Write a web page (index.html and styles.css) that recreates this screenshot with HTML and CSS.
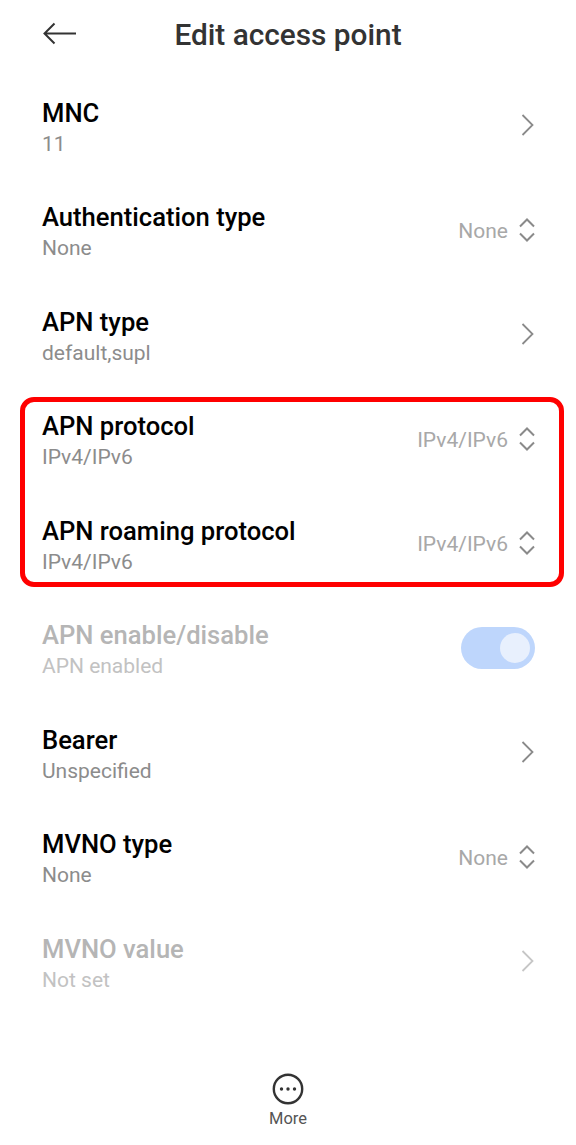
FILE: index.html
```html
<!DOCTYPE html>
<html>
  <head>
    <meta charset="utf-8">
    <title>Edit access point</title>
    <link rel="stylesheet" href="styles.css">
  </head>
  <body>
    <svg class="defs" width="0" height="0">
      <symbol id="chevron" viewBox="0 0 14 24">
        <path d="M2.500 2l10 10-10 10" fill="none" stroke="currentColor" stroke-width="1.8"/>
      </symbol>
      <symbol id="updown" viewBox="0 0 16 26">
        <path d="M1 9.500L8 2.500l7 7M1 16.500l7 7 7-7" fill="none" stroke="currentColor" stroke-width="2"/>
      </symbol>
    </svg>

    <div class="page">
      <header class="topbar">
        <svg class="back" viewBox="0 0 34 24">
          <path d="M11.500 1.500L1.500 11.500l10 10M1.500 11.500H33" fill="none" stroke="#333" stroke-width="2"/>
        </svg>
        <h1>Edit access point</h1>
      </header>

      <div class="list">
        <div class="row">
          <div class="text"><div class="name">MNC</div><div class="sub">11</div></div>
          <svg class="chevron"><use href="#chevron"/></svg>
        </div>
        <div class="row">
          <div class="text"><div class="name">Authentication type</div><div class="sub">None</div></div>
          <span class="value">None</span>
          <svg class="updown"><use href="#updown"/></svg>
        </div>
        <div class="row">
          <div class="text"><div class="name">APN type</div><div class="sub">default,supl</div></div>
          <svg class="chevron"><use href="#chevron"/></svg>
        </div>

        <div class="marked">
          <div class="row">
            <div class="text"><div class="name">APN protocol</div><div class="sub">IPv4/IPv6</div></div>
            <span class="value">IPv4/IPv6</span>
            <svg class="updown"><use href="#updown"/></svg>
          </div>
          <div class="row">
            <div class="text"><div class="name">APN roaming protocol</div><div class="sub">IPv4/IPv6</div></div>
            <span class="value">IPv4/IPv6</span>
            <svg class="updown"><use href="#updown"/></svg>
          </div>
        </div>

        <div class="row disabled">
          <div class="text"><div class="name">APN enable/disable</div><div class="sub">APN enabled</div></div>
          <div class="toggle"><div class="knob"></div></div>
        </div>
        <div class="row">
          <div class="text"><div class="name">Bearer</div><div class="sub">Unspecified</div></div>
          <svg class="chevron"><use href="#chevron"/></svg>
        </div>
        <div class="row">
          <div class="text"><div class="name">MVNO type</div><div class="sub">None</div></div>
          <span class="value">None</span>
          <svg class="updown"><use href="#updown"/></svg>
        </div>
        <div class="row disabled">
          <div class="text"><div class="name">MVNO value</div><div class="sub">Not set</div></div>
          <svg class="chevron"><use href="#chevron"/></svg>
        </div>
      </div>

      <footer class="bottom">
        <svg class="more" viewBox="0 0 32 32">
          <circle cx="16" cy="16" r="14.200" fill="none" stroke="#333" stroke-width="2.400"/>
          <circle cx="9.500" cy="16" r="1.700" fill="#333"/>
          <circle cx="16" cy="16" r="1.700" fill="#333"/>
          <circle cx="22.500" cy="16" r="1.700" fill="#333"/>
        </svg>
        <div class="more-label">More</div>
      </footer>
    </div>
  </body>
</html>
```

FILE: styles.css
```css
html, body {
  margin: 0;
  padding: 0;
  background-color: white;
}
body {
  font-family: Roboto, "Liberation Sans", sans-serif;
}
.defs {
  position: absolute;
}
.page {
  height: 1145px;
  display: flex;
  flex-direction: column;
  overflow: hidden;
}
.topbar {
  position: relative;
  height: 68px;
  display: flex;
  align-items: center;
  justify-content: center;
}
.topbar h1 {
  margin: 0;
  font-size: 29.8px;
  font-weight: 500;
  color: #333;
}
.back {
  position: absolute;
  left: 43px;
  top: 21.500px;
  width: 34px;
  height: 24px;
}
.list {
  display: flex;
  flex-direction: column;
  gap: 42.5px;
  padding: 26px 41px 0 42px;
}
.row {
  display: flex;
  align-items: center;
  height: 62px;
}
.text {
  flex: 1;
  padding-top: 5px;
}
.name {
  font-size: 25.6px;
  font-weight: 500;
  line-height: 32px;
  color: black;
}
.sub {
  font-size: 21px;
  line-height: 30px;
  color: #8c8c8c;
}
.value {
  font-size: 21px;
  color: #a8a8a8;
  margin-right: 11px;
  padding-top: 2px;
}
.chevron {
  width: 14px;
  height: 24px;
  margin-right: 1px;
  color: #8a8a8a;
}
.updown {
  width: 16px;
  height: 26px;
  color: #8a8a8a;
}
.marked {
  display: flex;
  flex-direction: column;
  gap: 42.5px;
  margin: -11px -29px -13px -22px;
  padding: 6px 24px 8px 17px;
  border: 5px solid #f00;
  border-radius: 14px;
}
.disabled .name {
  color: #b5b5b5;
}
.disabled .sub {
  color: #c2c2c2;
}
.disabled .chevron {
  color: #c6c6c6;
}
.toggle {
  width: 74px;
  height: 42px;
  border-radius: 21px;
  background-color: #bed6fc;
  display: flex;
  align-items: center;
  justify-content: flex-end;
  padding-right: 5px;
  box-sizing: border-box;
}
.knob {
  width: 30px;
  height: 30px;
  border-radius: 50%;
  background-color: #e8f0fd;
}
.bottom {
  margin-top: auto;
  padding-bottom: 14px;
  display: flex;
  flex-direction: column;
  align-items: center;
}
.more {
  width: 32px;
  height: 32px;
}
.more-label {
  font-size: 16.500px;
  line-height: 24px;
  margin-top: 2px;
  color: #555;
}
```
